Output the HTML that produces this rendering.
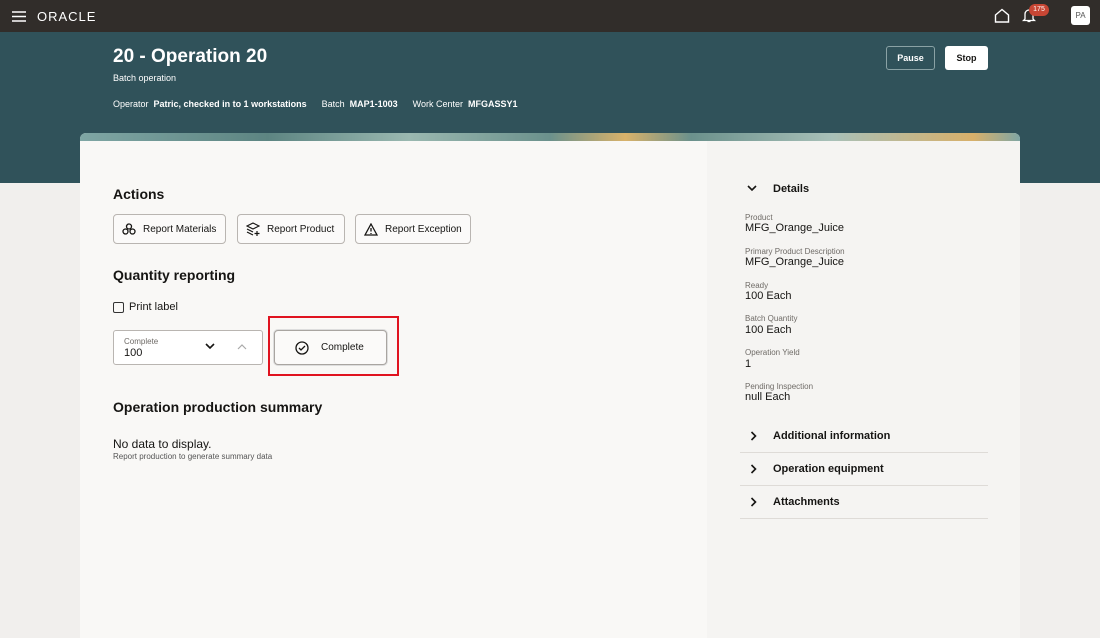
<!DOCTYPE html>
<html><head><meta charset="utf-8"><style>
*{box-sizing:border-box;margin:0;padding:0}
body{width:1100px;height:638px;overflow:hidden;font-family:"Liberation Sans",sans-serif;background:#f1efed;color:#161513;position:relative}
.top{position:absolute;left:0;top:0;width:1100px;height:32px;background:#312d2a}
.teal{position:absolute;left:0;top:32px;width:1100px;height:151px;background:#30525a}
.abs{position:absolute}
.w{color:#fff}
.card{position:absolute;left:80px;top:133px;width:940px;height:505px;background:#f9f8f6;overflow:hidden;border-radius:6px 6px 0 0}
.strip{position:absolute;left:0;top:0;width:940px;height:8px;background:linear-gradient(90deg,#7fa6a4,#5d8582 20%,#9ab8b0 35%,#6b918c 50%,#d9b26a 58%,#6b918c 65%,#a8c0b8 80%,#d8b06a 95%,#7fa6a4)}
.right{position:absolute;left:627px;top:8px;width:313px;height:497px;background:#f5f4f2}
.btn{position:absolute;height:30px;border:1px solid #b9b5b1;border-radius:4px;background:#fbfaf9;font-size:10px;display:flex;align-items:center;padding-left:8px;gap:7px}
.lbl{font-size:8px;color:#6f6b67}
.val{font-size:11px;color:#161513}
.sec{position:absolute;font-size:11px;font-weight:bold;width:248px;height:33px;border-bottom:1px solid #dedbd7;display:flex;align-items:center}
.sec svg{margin:0 16px 0 10px}
</style></head><body>
<div class="top"></div>
<svg class="abs" style="left:12px;top:11px" width="14" height="11"><path d="M0 1h14M0 5.5h14M0 10h14" stroke="#fff" stroke-width="1.5"/></svg>
<div class="abs w" style="left:37px;top:9px;font-size:13px;letter-spacing:1px">ORACLE</div>
<svg class="abs" style="left:994px;top:8px" width="16" height="15"><path d="M1.5 7L8 1.5 14.5 7V14H1.5Z" fill="none" stroke="#fff" stroke-width="1.4"/></svg>
<svg class="abs" style="left:1022px;top:8px" width="14" height="15"><path d="M3 11V6a4 4 0 0 1 8 0v5l1.5 1.5h-11ZM5.5 13.5h3" fill="none" stroke="#fff" stroke-width="1.3"/></svg>
<div class="abs w" style="left:1029px;top:4px;width:20px;height:12px;background:#c74634;border-radius:6px;font-size:7px;text-align:center;line-height:12px">175</div>
<div class="abs" style="left:1071px;top:6px;width:19px;height:19px;background:#fff;border-radius:3px;font-size:8px;color:#555;text-align:center;line-height:19px">PA</div>
<div class="teal"></div>
<div class="abs w" style="left:113px;top:46px;font-size:19px;font-weight:bold">20 - Operation 20</div>
<div class="abs w" style="left:113px;top:73px;font-size:9px">Batch operation</div>
<div class="abs w" style="left:113px;top:99px;font-size:9px">Operator&nbsp; <b>Patric, checked in to 1 workstations</b>&nbsp;&nbsp;&nbsp;&nbsp;&nbsp; Batch&nbsp; <b>MAP1-1003</b>&nbsp;&nbsp;&nbsp;&nbsp;&nbsp; Work Center&nbsp; <b>MFGASSY1</b></div>
<div class="abs w" style="left:886px;top:46px;width:49px;height:24px;border:1px solid #8aa2a5;border-radius:3px;font-size:9px;font-weight:bold;text-align:center;line-height:22px">Pause</div>
<div class="abs" style="left:945px;top:46px;width:43px;height:24px;background:#fff;border-radius:3px;font-size:9px;font-weight:bold;text-align:center;line-height:24px">Stop</div>
<div class="card"><div class="strip"></div><div class="right"></div></div>
<div class="abs" style="left:113px;top:186px;font-size:14px;font-weight:bold">Actions</div>
<div class="btn" style="left:113px;top:214px;width:113px"><svg width="14" height="12"><g fill="none" stroke="#161513" stroke-width="1.3"><circle cx="7" cy="3.5" r="2.5"/><circle cx="3.5" cy="8.5" r="2.5"/><circle cx="10.5" cy="8.5" r="2.5"/></g></svg>Report Materials</div>
<div class="btn" style="left:237px;top:214px;width:108px"><svg width="14" height="14"><g fill="none" stroke="#161513" stroke-width="1.2"><path d="M1 4l6-3 6 3-6 3zM1 7l6 3M1 10l6 3M11 9v5M8.5 11.5h5"/></g></svg>Report Product</div>
<div class="btn" style="left:355px;top:214px;width:116px"><svg width="14" height="13"><path d="M7 1L13 12H1Z M7 5v3.5M7 10v1" fill="none" stroke="#161513" stroke-width="1.3"/></svg>Report Exception</div>
<div class="abs" style="left:113px;top:267px;font-size:14px;font-weight:bold">Quantity reporting</div>
<div class="abs" style="left:113px;top:302px;width:11px;height:11px;border:1.3px solid #333;border-radius:2px"></div>
<div class="abs" style="left:129px;top:301px;font-size:11px">Print label</div>
<div class="abs" style="left:113px;top:330px;width:150px;height:35px;border:1px solid #b9b5b1;border-radius:3px;background:#fff"></div>
<div class="abs lbl" style="left:124px;top:337px">Complete</div>
<div class="abs val" style="left:124px;top:347px">100</div>
<svg class="abs" style="left:205px;top:343px" width="10" height="7"><path d="M1 1l4 4 4-4" fill="none" stroke="#161513" stroke-width="1.6"/></svg>
<svg class="abs" style="left:237px;top:343px" width="10" height="7"><path d="M1 6l4-4 4 4" fill="none" stroke="#aaa" stroke-width="1.2"/></svg>
<div class="abs" style="left:268px;top:316px;width:131px;height:60px;border:2px solid #e0131f"></div>
<div class="btn" style="left:274px;top:330px;width:113px;height:35px;padding-left:20px;gap:12px;border:1px solid #a9a5a1;box-shadow:0 0 0 1px #ddd"><svg width="14" height="14"><circle cx="7" cy="7" r="6" fill="none" stroke="#161513" stroke-width="1.3"/><path d="M4 7l2 2 4-4" fill="none" stroke="#161513" stroke-width="1.3"/></svg>Complete</div>
<div class="abs" style="left:113px;top:399px;font-size:14px;font-weight:bold">Operation production summary</div>
<div class="abs" style="left:113px;top:437px;font-size:12px">No data to display.</div>
<div class="abs" style="left:113px;top:452px;font-size:8px;color:#555">Report production to generate summary data</div>
<svg class="abs" style="left:747px;top:185px" width="10" height="7"><path d="M1 1l4 4 4-4" fill="none" stroke="#161513" stroke-width="1.6"/></svg>
<div class="abs" style="left:773px;top:183px;font-size:11px;font-weight:bold">Details</div>
<div class="abs" style="left:745px;top:213px;line-height:1.15">
<div class="lbl">Product</div><div class="val">MFG_Orange_Juice</div>
<div class="lbl" style="margin-top:12px">Primary Product Description</div><div class="val">MFG_Orange_Juice</div>
<div class="lbl" style="margin-top:12px">Ready</div><div class="val">100 Each</div>
<div class="lbl" style="margin-top:12px">Batch Quantity</div><div class="val">100 Each</div>
<div class="lbl" style="margin-top:12px">Operation Yield</div><div class="val">1</div>
<div class="lbl" style="margin-top:12px">Pending Inspection</div><div class="val">null Each</div>
</div>
<div class="sec" style="left:740px;top:420px"><svg width="7" height="10"><path d="M1.5 1l4 4-4 4" fill="none" stroke="#161513" stroke-width="1.6"/></svg>Additional information</div>
<div class="sec" style="left:740px;top:453px"><svg width="7" height="10"><path d="M1.5 1l4 4-4 4" fill="none" stroke="#161513" stroke-width="1.6"/></svg>Operation equipment</div>
<div class="sec" style="left:740px;top:486px"><svg width="7" height="10"><path d="M1.5 1l4 4-4 4" fill="none" stroke="#161513" stroke-width="1.6"/></svg>Attachments</div>
</body></html>
